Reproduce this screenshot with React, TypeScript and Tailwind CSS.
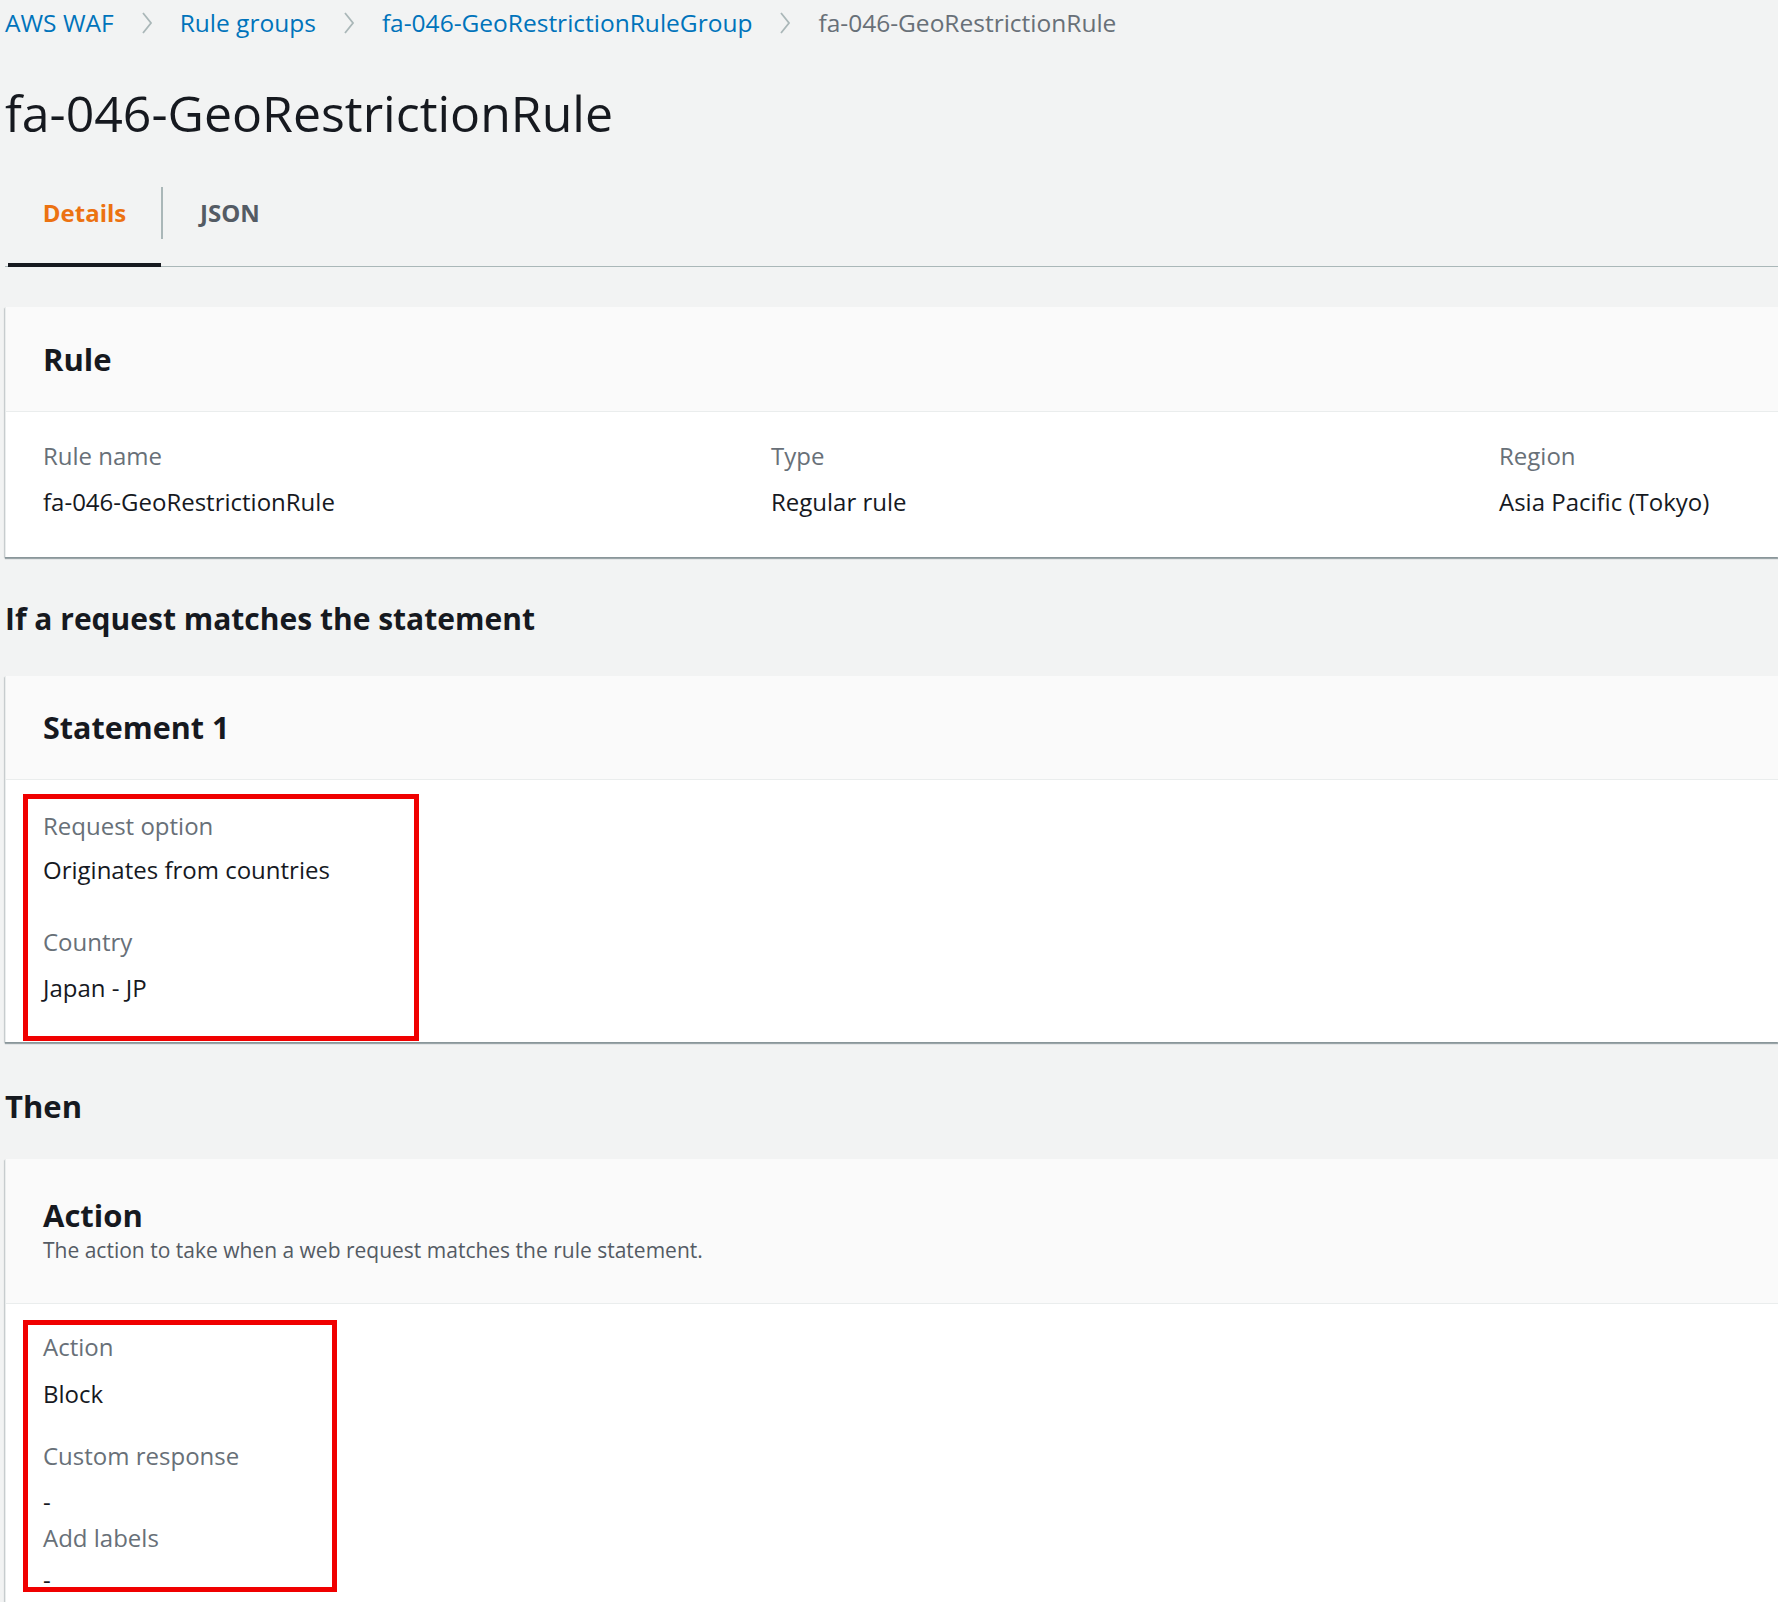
import React from "react";

const font = { fontFamily: "'Open Sans', 'Noto Sans', sans-serif" };

function Chevron() {
    return (
        <svg width="12" height="26" viewBox="0 0 12 26" className="mx-[27px] shrink-0">
            <path d="M2 3 L10 13 L2 23" fill="none" stroke="#aab7b8" strokeWidth="1.8" />
        </svg>
    );
}

function Field({ label, value, gap = "mt-[11px]" }: { label: string; value: string; gap?: string }) {
    return (
        <div>
            <div className="text-[24px] leading-[35px] text-[#687078]">{label}</div>
            <div className={`${gap} text-[24px] leading-[35px] text-[#16191f]`}>{value}</div>
        </div>
    );
}

function Card({ children }: { children: React.ReactNode }) {
    return (
        <div className="bg-white border-l border-[#eaeded] shadow-[0_2px_1px_0_rgba(0,28,36,0.35),-1px_1px_1px_0_rgba(0,28,36,0.12)]">
            {children}
        </div>
    );
}

export default function App() {
    return (
        <div className="w-[1778px] h-[1602px] overflow-hidden bg-[#f2f3f3] pl-[5px]" style={font}>
            {/* breadcrumbs */}
            <nav className="flex items-center h-[46px] text-[24.5px]">
                <span className="text-[#0073bb]">AWS WAF</span>
                <Chevron />
                <span className="text-[#0073bb]">Rule groups</span>
                <Chevron />
                <span className="text-[#0073bb]">fa-046-GeoRestrictionRuleGroup</span>
                <Chevron />
                <span className="text-[#687078]">fa-046-GeoRestrictionRule</span>
            </nav>

            <h1 className="mt-[39px] h-[56px] leading-[56px] text-[50px] text-[#16191f]">fa-046-GeoRestrictionRule</h1>

            {/* tabs */}
            <div className="mt-[46px] h-[80px] flex border-b border-[#aab7b8]">
                <div className="ml-[3px] w-[153px] flex flex-col justify-between">
                    <div className="h-[52px] flex items-center justify-center text-[24px] font-bold text-[#ec7211]">Details</div>
                    <div className="h-[4px] -mb-px bg-[#16191f]" />
                </div>
                <div className="w-[2px] h-[52px] bg-[#aab7b8]" />
                <div className="h-[52px] pl-[37px] flex items-center text-[24px] font-bold text-[#545b64]">JSON</div>
            </div>

            {/* Rule card */}
            <div className="mt-[40px]">
                <Card>
                    <div className="h-[105px] flex items-center pl-[37px] bg-[#fafafa] border-b border-[#eaeded]">
                        <h2 className="text-[31px] font-bold text-[#16191f]">Rule</h2>
                    </div>
                    <div className="h-[145px] pt-[26px] pl-[37px] grid grid-cols-[728px_728px_1fr]">
                        <Field label="Rule name" value="fa-046-GeoRestrictionRule" gap="mt-[11px]" />
                        <Field label="Type" value="Regular rule" gap="mt-[11px]" />
                        <Field label="Region" value="Asia Pacific (Tokyo)" gap="mt-[11px]" />
                    </div>
                </Card>
            </div>

            <h2 className="mt-[39px] h-[46px] leading-[46px] text-[30px] font-bold text-[#16191f]">If a request matches the statement</h2>

            {/* Statement card */}
            <div className="mt-[34px]">
                <Card>
                    <div className="h-[104px] flex items-center pl-[37px] bg-[#fafafa] border-b border-[#eaeded]">
                        <h2 className="text-[30.5px] font-bold text-[#16191f]">Statement 1</h2>
                    </div>
                    <div className="h-[262px] pt-[14px] pl-[17px]">
                        <div className="w-[396px] h-[247px] border-[5px] border-[#f00000] pl-[15px] pt-[9px]">
                            <Field label="Request option" value="Originates from countries" gap="mt-[9px]" />
                            <div className="mt-[37px]">
                                <Field label="Country" value="Japan - JP" gap="mt-[11px]" />
                            </div>
                        </div>
                    </div>
                </Card>
            </div>

            <h2 className="mt-[41px] h-[46px] leading-[46px] text-[31px] font-bold text-[#16191f]">Then</h2>

            {/* Action card */}
            <div className="mt-[30px]">
                <Card>
                    <div className="h-[145px] pt-[36px] pl-[37px] bg-[#fafafa] border-b border-[#eaeded]">
                        <h2 className="h-[40px] leading-[40px] text-[31px] font-bold text-[#16191f]">Action</h2>
                        <p className="h-[30px] leading-[30px] text-[21px] text-[#545b64]">The action to take when a web request matches the rule statement.</p>
                    </div>
                    <div className="h-[320px] pt-[16px] pl-[17px]">
                        <div className="w-[314px] h-[272px] border-[5px] border-[#f00000] pl-[15px] pt-[4px]">
                            <Field label="Action" value="Block" gap="mt-[12px]" />
                            <div className="mt-[27px]">
                                <Field label="Custom response" value="-" gap="mt-[11px]" />
                            </div>
                            <div className="mt-[1px]">
                                <Field label="Add labels" value="-" gap="mt-[7px]" />
                            </div>
                        </div>
                    </div>
                </Card>
            </div>
        </div>
    );
}
